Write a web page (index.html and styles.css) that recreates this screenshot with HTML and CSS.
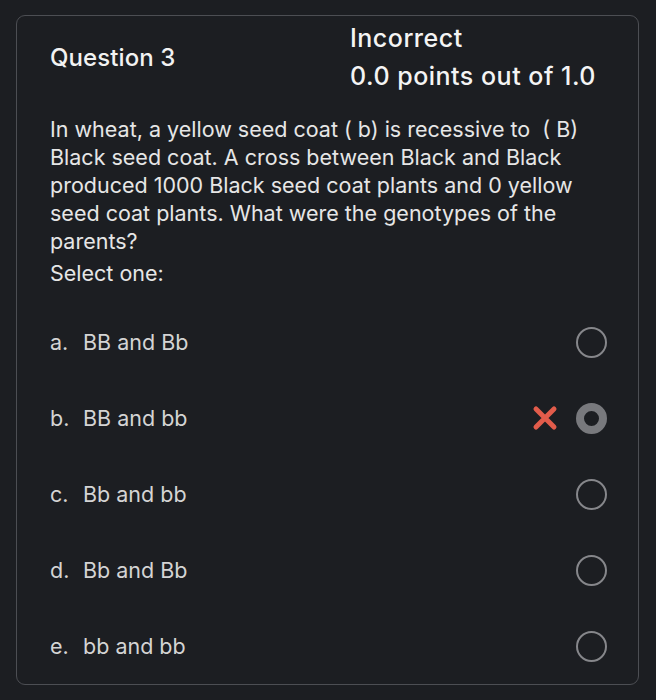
FILE: index.html
```html
<!DOCTYPE html>
<html>
<head>
<meta charset="utf-8">
<link rel="stylesheet" href="styles.css">
</head>
<body>
<div class="card">
  <div class="header">
    <div class="qnum">Question 3</div>
    <div class="status">
      <div class="state">Incorrect</div>
      <div class="grade">0.0 points out of 1.0</div>
    </div>
  </div>
  <div class="qtext">In wheat, a yellow seed coat ( b) is recessive to &nbsp;( B) Black seed coat. A cross between Black and Black produced 1000 Black seed coat plants and 0 yellow seed coat plants. What were the genotypes of the parents?</div>
  <div class="prompt">Select one:</div>
  <div class="options">
    <div class="opt"><span class="letter">a.</span><span class="label">BB and Bb</span><span class="mark"></span><span class="radio"></span></div>
    <div class="opt"><span class="letter">b.</span><span class="label">BB and bb</span><span class="mark"><svg width="26" height="26" viewBox="0 0 26 26"><path d="M4 4 L22 22 M22 4 L4 22" stroke="#e25c4b" stroke-width="5" stroke-linecap="round"/></svg></span><span class="radio checked"></span></div>
    <div class="opt"><span class="letter">c.</span><span class="label">Bb and bb</span><span class="mark"></span><span class="radio"></span></div>
    <div class="opt"><span class="letter">d.</span><span class="label">Bb and Bb</span><span class="mark"></span><span class="radio"></span></div>
    <div class="opt"><span class="letter">e.</span><span class="label">bb and bb</span><span class="mark"></span><span class="radio"></span></div>
  </div>
</div>
</body>
</html>
```
FILE: styles.css
```css
html, body {
  margin: 0;
  padding: 0;
  background: #1c1e22;
}
body {
  padding: 15px 17px 15px 16px;
  font-family: Inter, "Noto Sans", sans-serif;
  color: #ececec;
}
.card {
  border: 1.5px solid #4c4e53;
  border-radius: 9px;
  height: 670px;
  box-sizing: border-box;
  padding: 0 31px 0 33px;
}
.header {
  display: flex;
  align-items: center;
  padding-top: 3px;
}
.qnum {
  width: 300px;
  font-size: 24px;
  font-weight: 500;
  color: #f2f2f2;
  letter-spacing: 0.1px;
}
.status {
  display: flex;
  flex-direction: column;
}
.state, .grade {
  font-size: 25px;
  font-weight: 500;
  color: #f4f4f4;
  letter-spacing: 0.5px;
  line-height: 38px;
}
.qtext {
  margin-top: 20px;
  font-size: 21.5px;
  line-height: 28px;
  color: #e6e6e6;
  width: 540px;
}
.prompt {
  margin-top: 4px;
  font-size: 21.5px;
  line-height: 28px;
  color: #e6e6e6;
}
.options {
  margin-top: 17px;
  display: flex;
  flex-direction: column;
}
.opt {
  display: flex;
  align-items: center;
  height: 76px;
  font-size: 21.5px;
  color: #d4d4d4;
}
.letter {
  width: 33px;
}
.label {
  flex: 1;
}
.mark {
  width: 26px;
  height: 26px;
  margin-right: 18px;
}
.radio {
  width: 31px;
  height: 31px;
  border: 2px solid #86878b;
  border-radius: 50%;
  box-sizing: border-box;
}
.radio.checked {
  border: 8px solid #78797d;
  background: #1c1e22;
}
```
